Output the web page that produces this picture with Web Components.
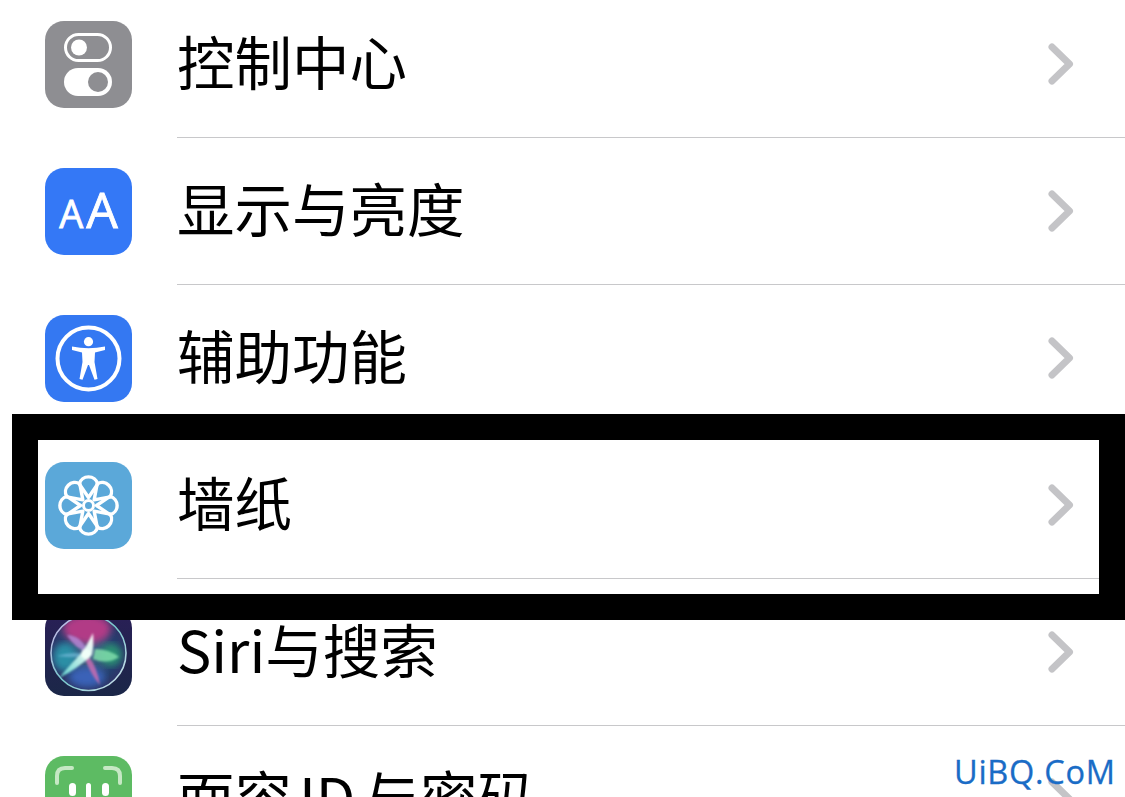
<!DOCTYPE html>
<html lang="zh-CN"><head><meta charset="utf-8"><title>设置</title>
<style>
html,body{margin:0;padding:0;background:#fff;overflow:hidden}
body{width:1125px;height:797px;font-family:"Noto Sans CJK SC","Noto Sans",sans-serif;color:#000}
</style></head><body>
<settings-page>
  <settings-row><app-icon slot="icon" kind="control"></app-icon>控制中心</settings-row>
  <settings-row><app-icon slot="icon" kind="display"></app-icon>显示与亮度</settings-row>
  <settings-row><app-icon slot="icon" kind="access"></app-icon>辅助功能</settings-row>
  <settings-row><app-icon slot="icon" kind="wallpaper"></app-icon>墙纸</settings-row>
  <settings-row><app-icon slot="icon" kind="siri"></app-icon>Siri与搜索</settings-row>
  <settings-row><app-icon slot="icon" kind="face"></app-icon>面容<span style="margin:0 7px">ID</span>与密码</settings-row>
</settings-page>
<script>
class SettingsPage extends HTMLElement{
  constructor(){super();this.attachShadow({mode:'open'}).innerHTML=`<style>
    :host{display:block;position:relative;width:1125px;height:797px;overflow:hidden}
    .list{display:flex;flex-direction:column;margin-top:-9px}
    .frame{position:absolute;left:12px;top:414px;width:1113px;height:206px;box-sizing:border-box;
      border:solid #000;border-width:26px 26px 26px 26px;pointer-events:none}
    .mark{position:absolute;left:954px;top:750px;font:400 32.5px/44px "Open Sans",sans-serif;letter-spacing:.7px;color:#1a6cc6;white-space:nowrap;-webkit-text-stroke:.3px #1a6cc6}
  </style><div class="list"><slot></slot></div><div class="frame"></div><div class="mark">UiBQ.CoM</div>`}
}
class SettingsRow extends HTMLElement{
  constructor(){super();this.attachShadow({mode:'open'}).innerHTML=`<style>
    :host{display:flex;align-items:center;height:147px;padding-left:45px;flex:none}
    .icon{display:block;width:87px;height:87px;flex:none}
    .body{flex:1;height:100%;margin-left:45px;box-sizing:border-box;border-bottom:1px solid #c8c8ca;
      display:flex;align-items:center;justify-content:space-between;padding-right:51px}
    .label{font-size:57.5px;line-height:80px;color:#000;padding-bottom:8px}
    svg{display:block;width:26px;height:42px}
  </style><slot class="icon" name="icon"></slot><div class="body"><span class="label"><slot></slot></span>
  <svg viewBox="0 0 26 42"><path d="M4 4 L21.5 21 L4 38" fill="none" stroke="#c4c4c7" stroke-width="7" stroke-linecap="round" stroke-linejoin="round"/></svg></div>`}
}
const ICONS={
control:`<rect width="87" height="87" rx="19" fill="#8e8e92"/>
  <rect x="20.5" y="13.5" width="45" height="26" rx="13" fill="none" stroke="#fff" stroke-width="3"/>
  <circle cx="34" cy="26.5" r="8" fill="#fff"/>
  <rect x="19" y="47" width="48" height="28" rx="14" fill="#fff"/>
  <circle cx="53" cy="61" r="10" fill="#8e8e92"/>`,
access:`<rect width="87" height="87" rx="19" fill="#3478f2"/>
  <circle cx="43.5" cy="43.5" r="31" fill="none" stroke="#fff" stroke-width="4"/>
  <circle cx="43.5" cy="26.7" r="4.6" fill="#fff"/>
  <path d="M27 31.5 Q43.5 35 60 31.5 L60 35 L50 37.5 L49.5 47 L52.5 64 L49.5 64.8 L44 50 L43 50 L37.5 64.8 L34.5 64 L37.5 47 L37 37.5 L27 35Z" fill="#fff" stroke-linejoin="round"/>`,
wallpaper:`<rect width="87" height="87" rx="19" fill="#5ba8d9"/>
  <g transform="translate(43.5 43.5)" fill="none" stroke="#fff" stroke-width="3.4" stroke-linejoin="round">
  ${[0,45,90,135,180,225,270,315].map(a=>`<path transform="rotate(${a})" d="M0 -8 L-9.2 -21.5 A9.5 9.5 0 0 1 9.2 -21.5Z"/>`).join('')}
  <circle r="5" fill="#5ba8d9" stroke-width="3"/></g>`,
siri:`<defs>
  <linearGradient id="sb" x1="0" y1="0" x2="0" y2="1"><stop offset="0" stop-color="#2a1f57"/><stop offset="1" stop-color="#1b2748"/></linearGradient>
  <radialGradient id="sc" cx="50%" cy="50%" r="50%"><stop offset="0" stop-color="#4a6a8c"/><stop offset=".75" stop-color="#24406f"/><stop offset="1" stop-color="#2f3468"/></radialGradient>
  <linearGradient id="sr" x1="0" y1="0" x2="1" y2="1"><stop offset="0" stop-color="#d6b8ee"/><stop offset=".5" stop-color="#76c8cc"/><stop offset="1" stop-color="#d9e2f0"/></linearGradient>
  <linearGradient id="r1" x1="0" y1="1" x2="1" y2="0"><stop offset="0" stop-color="#5fd6d0"/><stop offset=".7" stop-color="#e8fff6"/><stop offset="1" stop-color="#fff"/></linearGradient>
  <filter id="b3"><feGaussianBlur stdDeviation="3.5"/></filter><filter id="b1"><feGaussianBlur stdDeviation=".8"/></filter>
  <clipPath id="cc"><circle cx="43.5" cy="44" r="37"/></clipPath></defs>
  <rect width="87" height="87" rx="19" fill="url(#sb)"/>
  <circle cx="43.5" cy="44" r="37.5" fill="url(#sc)"/>
  <g clip-path="url(#cc)">
   <ellipse cx="42" cy="20" rx="24" ry="15" fill="#b23a86" filter="url(#b3)"/>
   <ellipse cx="20" cy="48" rx="12" ry="14" fill="#2a8fa6" filter="url(#b3)"/>
   <ellipse cx="66" cy="46" rx="11" ry="11" fill="#2a8f72" filter="url(#b3)"/>
   <ellipse cx="42" cy="68" rx="18" ry="10" fill="#3a62b8" filter="url(#b3)"/>
   <g filter="url(#b1)">
    <path d="M50 40 Q64 40 74 48 Q62 56 48 50Z" fill="#7fdcaa" opacity=".85"/>
    <path d="M44 48 Q52 58 55 76 Q46 66 40 50Z" fill="#c86cb0" opacity=".85"/>
    <path d="M22 26 Q36 26 44 44 Q30 40 22 26Z" fill="#b68ad8" opacity=".8"/>
    <path d="M12 47 Q26 42 40 45 L40 48 Q26 49 12 47Z" fill="#6fb6d6" opacity=".7"/>
    <path d="M14 69 Q28 52 38 43 L48 24 Q49 36 47 46 Q32 60 14 69Z" fill="url(#r1)" opacity=".95"/>
    <circle cx="41" cy="45" r="5" fill="#f0fff8"/>
   </g>
  </g>
  <circle cx="43.5" cy="44" r="37.5" fill="none" stroke="url(#sr)" stroke-width="1.6"/>`,
face:`<rect width="87" height="87" rx="19" fill="#5dbb63"/>
  <g fill="none" stroke="#c6e8c4" stroke-width="4" stroke-linecap="round">
   <path d="M12 27 L12 20 Q12 12 20 12 L27 12"/><path d="M75 27 L75 20 Q75 12 67 12 L60 12"/></g>
  <g fill="#fff"><rect x="24" y="27" width="7" height="13" rx="3.5"/><rect x="41" y="27" width="5" height="17" rx="2.5"/><rect x="57" y="27" width="7" height="13" rx="3.5"/></g>`
};
class AppIcon extends HTMLElement{
  constructor(){super();this.attachShadow({mode:'open'})}
  connectedCallback(){
    const k=this.getAttribute('kind');
    const css=`<style>:host{display:block;width:87px;height:87px;position:relative}
      svg{display:block;width:87px;height:87px}
      .aa{width:87px;height:87px;border-radius:19px;background:#3478f6;color:#fff;display:flex;align-items:baseline;justify-content:center;gap:3px;
        font-family:"Open Sans",sans-serif;font-weight:500;line-height:73px;box-sizing:border-box;padding-top:5px;-webkit-text-stroke:.8px #fff}
      .s{font-size:38px}.l{font-size:50px}</style>`;
    this.shadowRoot.innerHTML=css+(k==='display'
      ?`<div class="aa"><span class="s">A</span><span class="l">A</span></div>`
      :`<svg viewBox="0 0 87 87">${ICONS[k]}</svg>`);
  }
}
customElements.define('settings-page',SettingsPage);
customElements.define('settings-row',SettingsRow);
customElements.define('app-icon',AppIcon);
</script>
</body></html>
